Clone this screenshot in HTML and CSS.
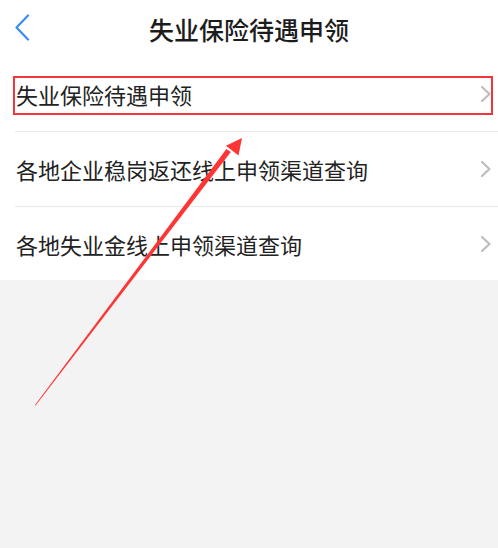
FILE: index.html
```html
<!DOCTYPE html>
<html lang="zh-CN">
<head>
<meta charset="utf-8">
<title>失业保险待遇申领</title>
<link rel="stylesheet" href="styles.css">
</head>
<body>
<div class="page">
  <header class="nav">
    <svg class="back" width="16" height="28" viewBox="0 0 16 28"><polyline points="13,1.5 1.5,13.5 13,25.5" fill="none" stroke="#3a8df0" stroke-width="2.2" stroke-linecap="round" stroke-linejoin="round"/></svg>
    <h1 class="title">失业保险待遇申领</h1>
  </header>
  <ul class="list">
    <li class="row"><span class="label">失业保险待遇申领</span><svg class="chev" width="12" height="18" viewBox="0 0 12 18"><polyline points="2,2 9.5,9 2,16" fill="none" stroke="#bdbdbd" stroke-width="2.2" stroke-linecap="round" stroke-linejoin="round"/></svg></li>
    <li class="row"><span class="label">各地企业稳岗返还线上申领渠道查询</span><svg class="chev" width="12" height="18" viewBox="0 0 12 18"><polyline points="2,2 9.5,9 2,16" fill="none" stroke="#bdbdbd" stroke-width="2.2" stroke-linecap="round" stroke-linejoin="round"/></svg></li>
    <li class="row last"><span class="label">各地失业金线上申领渠道查询</span><svg class="chev" width="12" height="18" viewBox="0 0 12 18"><polyline points="2,2 9.5,9 2,16" fill="none" stroke="#bdbdbd" stroke-width="2.2" stroke-linecap="round" stroke-linejoin="round"/></svg></li>
  </ul>
  <div class="highlight"></div>
  <svg class="arrow" width="498" height="548" viewBox="0 0 498 548">
    <polygon points="35,405 35.6,405.4 230.8,152 226.4,148.9" fill="#fe3535"/>
    <polygon points="242,138 238.5,155.5 225.9,145.7" fill="#fe3535"/>
  </svg>
</div>
</body>
</html>
```
FILE: styles.css
```css
html, body {
  margin: 0;
  padding: 0;
  background: #f3f3f3;
}
body {
  font-family: "Noto Sans CJK SC", "Noto Sans", sans-serif;
  color: #222;
}
.page {
  position: relative;
  width: 498px;
  height: 548px;
  overflow: hidden;
}
.nav {
  height: 57px;
  background: #fff;
  display: flex;
  align-items: center;
  justify-content: center;
  position: relative;
}
.back {
  position: absolute;
  left: 15px;
  top: 14px;
}
.title {
  margin: 0;
  font-size: 25px;
  font-weight: 500;
  line-height: 1;
  color: #1c1c1c;
  padding-top: 2px;
}
.list {
  list-style: none;
  margin: 0;
  padding: 0;
  background: #fff;
}
.row {
  margin-left: 15px;
  padding-left: 1px;
  padding-right: 6px;
  height: 74px;
  border-bottom: 1px solid #e8e8e8;
  display: flex;
  align-items: center;
  justify-content: space-between;
}
.row.last {
  height: 73px;
  border-bottom: none;
}
.label {
  font-size: 22px;
  line-height: 1;
  color: #222;
}
.chev {
  display: block;
}
.highlight {
  position: absolute;
  left: 13px;
  top: 76px;
  width: 476px;
  height: 35px;
  border: 2px solid #f5333b;
}
.arrow {
  position: absolute;
  left: 0;
  top: 0;
  pointer-events: none;
}
```
